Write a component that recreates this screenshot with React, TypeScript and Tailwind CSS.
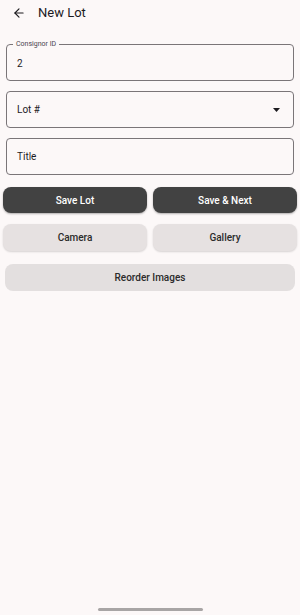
import { ArrowLeft } from "lucide-react"

function Field({ label, value, dropdown }: { label: string; value?: string; dropdown?: boolean }) {
    if (value !== undefined) {
        return (
            <div className="relative flex h-[37px] items-center rounded-[4px] border border-[#7a7578] pl-[10px]">
                <span className="absolute left-[6px] top-[-5px] bg-[#fcf8f8] px-[3px] text-[7px] leading-[8px] text-[#49454f]">
                    {label}
                </span>
                <span className="pt-[1px] text-[10px] text-[#1c1b1f]">{value}</span>
            </div>
        )
    }
    return (
        <div className="flex h-[37px] items-center justify-between rounded-[4px] border border-[#7a7578] pl-[10px] pr-[13px]">
            <span className="text-[10px] text-[#1c1b1f]">{label}</span>
            {dropdown && (
                <svg width="7" height="4" viewBox="0 0 7 4">
                    <path d="M0 0h7L3.5 4z" fill="#1c1b1f" />
                </svg>
            )}
        </div>
    )
}

export default function App() {
    return (
        <div className="relative flex h-[615px] w-[300px] flex-col bg-[#fcf8f8] font-['Roboto',sans-serif]">
            <div className="flex h-[26px] items-center gap-[12px] pl-[12px]">
                <ArrowLeft size={14} strokeWidth={2} className="text-[#1c1b1f]" />
                <span className="text-[13px] text-[#1c1b1f]">New Lot</span>
            </div>
            <div className="flex flex-col gap-[10px] px-[6px] pt-[18px]">
                <Field label="Consignor ID" value="2" />
                <Field label="Lot #" dropdown />
                <Field label="Title" />
            </div>
            <div className="mt-[12px] grid grid-cols-2 gap-[6px] px-[3px]">
                <button className="h-[26px] rounded-[8px] bg-[#424242] text-[10px] font-medium text-white shadow-[0_1px_2px_rgba(0,0,0,0.3)]">
                    Save Lot
                </button>
                <button className="h-[26px] rounded-[8px] bg-[#424242] text-[10px] font-medium text-white shadow-[0_1px_2px_rgba(0,0,0,0.3)]">
                    Save &amp; Next
                </button>
            </div>
            <div className="mt-[11px] grid grid-cols-2 gap-[6px] px-[3px]">
                <button className="h-[27px] rounded-[8px] bg-[#e6e1e1] text-[10px] font-medium text-[#2b2b2b] shadow-[0_1px_2px_rgba(0,0,0,0.15)]">
                    Camera
                </button>
                <button className="h-[27px] rounded-[8px] bg-[#e6e1e1] text-[10px] font-medium text-[#2b2b2b] shadow-[0_1px_2px_rgba(0,0,0,0.15)]">
                    Gallery
                </button>
            </div>
            <div className="mt-[13px] px-[5px]">
                <button className="h-[27px] w-full rounded-[8px] bg-[#e3dfdf] text-[10px] font-medium text-[#2b2b2b]">
                    Reorder Images
                </button>
            </div>
            <div className="mt-auto flex justify-center pb-[4px]">
                <div className="h-[3px] w-[105px] rounded-full bg-[#a8a5a5]" />
            </div>
        </div>
    )
}
